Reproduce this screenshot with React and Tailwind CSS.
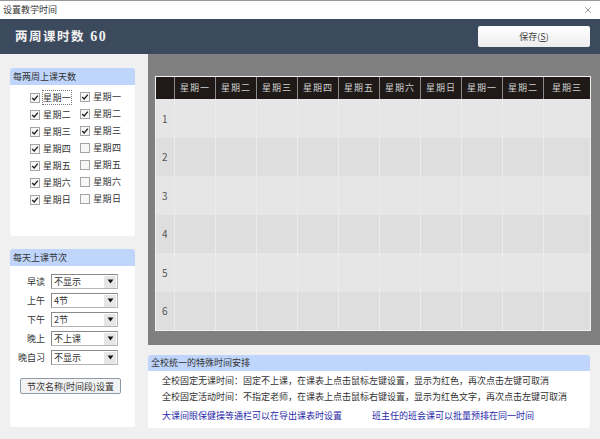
import { X } from "lucide-react";

const FONT = "font-['Noto_Sans_CJK_SC','Liberation_Sans',sans-serif]";
const WEEK = ["星期一", "星期二", "星期三", "星期四", "星期五", "星期六", "星期日"];
const HEADERS = [...WEEK, "星期一", "星期二", "星期三"];
const ROWS = [1, 2, 3, 4, 5, 6];
const SELECTS = [
  ["早读", "不显示"],
  ["上午", "4节"],
  ["下午", "2节"],
  ["晚上", "不上课"],
  ["晚自习", "不显示"],
];

function Check({ label, checked, focused }) {
  return (
    <div className="flex h-[17px] items-center gap-[3px] whitespace-nowrap">
      <span className="flex h-[10px] w-[10px] shrink-0 items-center justify-center border border-[#a5a5a5] bg-[#f7f7f7]">
        {checked && (
          <svg viewBox="0 0 10 10" className="h-[8px] w-[8px]">
            <path d="M1.5 5 L4 7.5 L8.5 2" fill="none" stroke="#222" strokeWidth="1.7" />
          </svg>
        )}
      </span>
      <span className={`tracking-[0.4px] ${focused ? "outline outline-1 outline-dotted outline-[#777]" : ""}`}>{label}</span>
    </div>
  );
}

function Panel({ title, className, children }) {
  return (
    <div className={`overflow-hidden rounded-[3px] bg-white ${className}`}>
      <div className="flex h-[17px] items-center bg-[#bfd5fb] pl-[3px] text-[#333]">{title}</div>
      {children}
    </div>
  );
}

function FakeSelect({ label, value }) {
  return (
    <div className="flex h-[19px] items-center whitespace-nowrap">
      <span className="w-[31px] text-right">{label}</span>
      <div className="ml-[6px] flex h-[15px] w-[67px] items-center justify-between border border-[#8a8a8a] border-b-[#b5b5b5] border-r-[#b5b5b5] bg-white pl-[2px] pr-[1px]">
        <span className="leading-none">{value}</span>
        <span className="flex h-[12px] w-[12px] items-center justify-center bg-[#e6e6e6]">
          <svg viewBox="0 0 8 6" className="h-[5px] w-[7px]">
            <path d="M0.5 0.5 H7.5 L4 5.5 Z" fill="#111" />
          </svg>
        </span>
      </div>
    </div>
  );
}

export default function App() {
  return (
    <div className={`flex h-[439px] w-[600px] flex-col overflow-hidden bg-[#f0f0f0] text-[9px] text-[#333] ${FONT}`}>
      <div className="flex h-[19px] items-center justify-between border-t border-[#999] bg-white pl-[3px] pr-[7px]">
        <span>设置教学时间</span>
        <X size={10} strokeWidth={1.2} color="#333" />
      </div>

      <div className="flex h-[35px] items-center justify-between bg-[#3c4a5e] pl-[15px] pr-[10px]">
        <span className="whitespace-nowrap text-[12.5px] font-bold tracking-[1.5px] text-[#f2f2f2]">
          两周课时数 <span className="ml-[1px] font-['Liberation_Serif',serif] text-[14px]">60</span>
        </span>
        <button className="h-[21px] w-[112px] rounded-[2px] bg-gradient-to-b from-white to-[#ececec] text-[9px] text-[#444]">
          保存(<span className="underline">S</span>)
        </button>
      </div>

      <div className="flex flex-1 items-start">
        <div className="flex w-[148px] shrink-0 flex-col gap-[13px] pl-[10px] pr-[13px] pt-[14px]">
          <Panel title="每两周上课天数" className="h-[168px]">
            <div className="flex gap-[9px] pl-[20px] pt-[4px]">
              <div>
                {WEEK.map((day, i) => (
                  <Check key={day} label={day} checked focused={i === 0} />
                ))}
              </div>
              <div className="-mt-[1px]">
                {WEEK.map((day, i) => (
                  <Check key={day} label={day} checked={i < 3} />
                ))}
              </div>
            </div>
          </Panel>
          <Panel title="每天上课节次" className="h-[178px]">
            <div className="pl-[4px] pt-[6px]">
              {SELECTS.map(([label, value]) => (
                <FakeSelect key={label} label={label} value={value} />
              ))}
            </div>
            <button className="ml-[10px] mt-[11px] h-[16px] w-[101px] whitespace-nowrap rounded-[2px] border border-[#8f9aa8] bg-[#f3f3f3] text-[9px] leading-none text-[#333]">
              节次名称(时间段)设置
            </button>
          </Panel>
        </div>

        <div className="flex w-[452px] flex-col">
          <div className="h-[291px] bg-[#808080] pl-[7px] pt-[22px]">
            <table className="w-[436px] table-fixed border-separate border-spacing-0 border border-[#f2f2f2] bg-[#e4e4e4]">
              <thead>
                <tr className="h-[22px]">
                  <th className="w-[18px] bg-[#1f1a17]" />
                  {HEADERS.map((h, i) => (
                    <th
                      key={i}
                      className={`border-l border-[#8a8a8a] bg-[#1f1a17] text-[9px] font-normal tracking-[1px] text-[#cfcfcf] ${i < 9 ? "w-[41px]" : ""}`}
                    >
                      {h}
                    </th>
                  ))}
                </tr>
              </thead>
              <tbody>
                {ROWS.map((row) => (
                  <tr key={row} className={row % 2 ? "h-[38.5px] bg-[#e6e6e6]" : "h-[38.5px] bg-[#dedede]"}>
                    <td className="pl-[6px] text-[10px] text-[#555]">{row}</td>
                    {HEADERS.map((_, i) => (
                      <td key={i} className="border-l border-[#ececec]" />
                    ))}
                  </tr>
                ))}
              </tbody>
            </table>
          </div>

          <div className="mt-[10px] h-[73px] w-[442px] overflow-hidden rounded-[3px] bg-white">
            <div className="flex h-[16px] items-center bg-[#bfd5fb] pl-[3px] text-[#333]">全校统一的特殊时间安排</div>
            <p className="whitespace-nowrap pl-[14px] pt-[2px] leading-[16px]">全校固定无课时间：固定不上课，在课表上点击鼠标左键设置，显示为红色，再次点击左键可取消</p>
            <p className="whitespace-nowrap pl-[14px] leading-[16px]">全校固定活动时间：不指定老师，在课表上点击鼠标右键设置，显示为红色文字，再次点击左键可取消</p>
            <div className="flex gap-[30px] whitespace-nowrap pl-[14px] pt-[3px] leading-[16px] text-[#2a2aaa]">
              <span>大课间眼保健操等通栏可以在导出课表时设置</span>
              <span>班主任的班会课可以批量预排在同一时间</span>
            </div>
          </div>
        </div>
      </div>
    </div>
  );
}
